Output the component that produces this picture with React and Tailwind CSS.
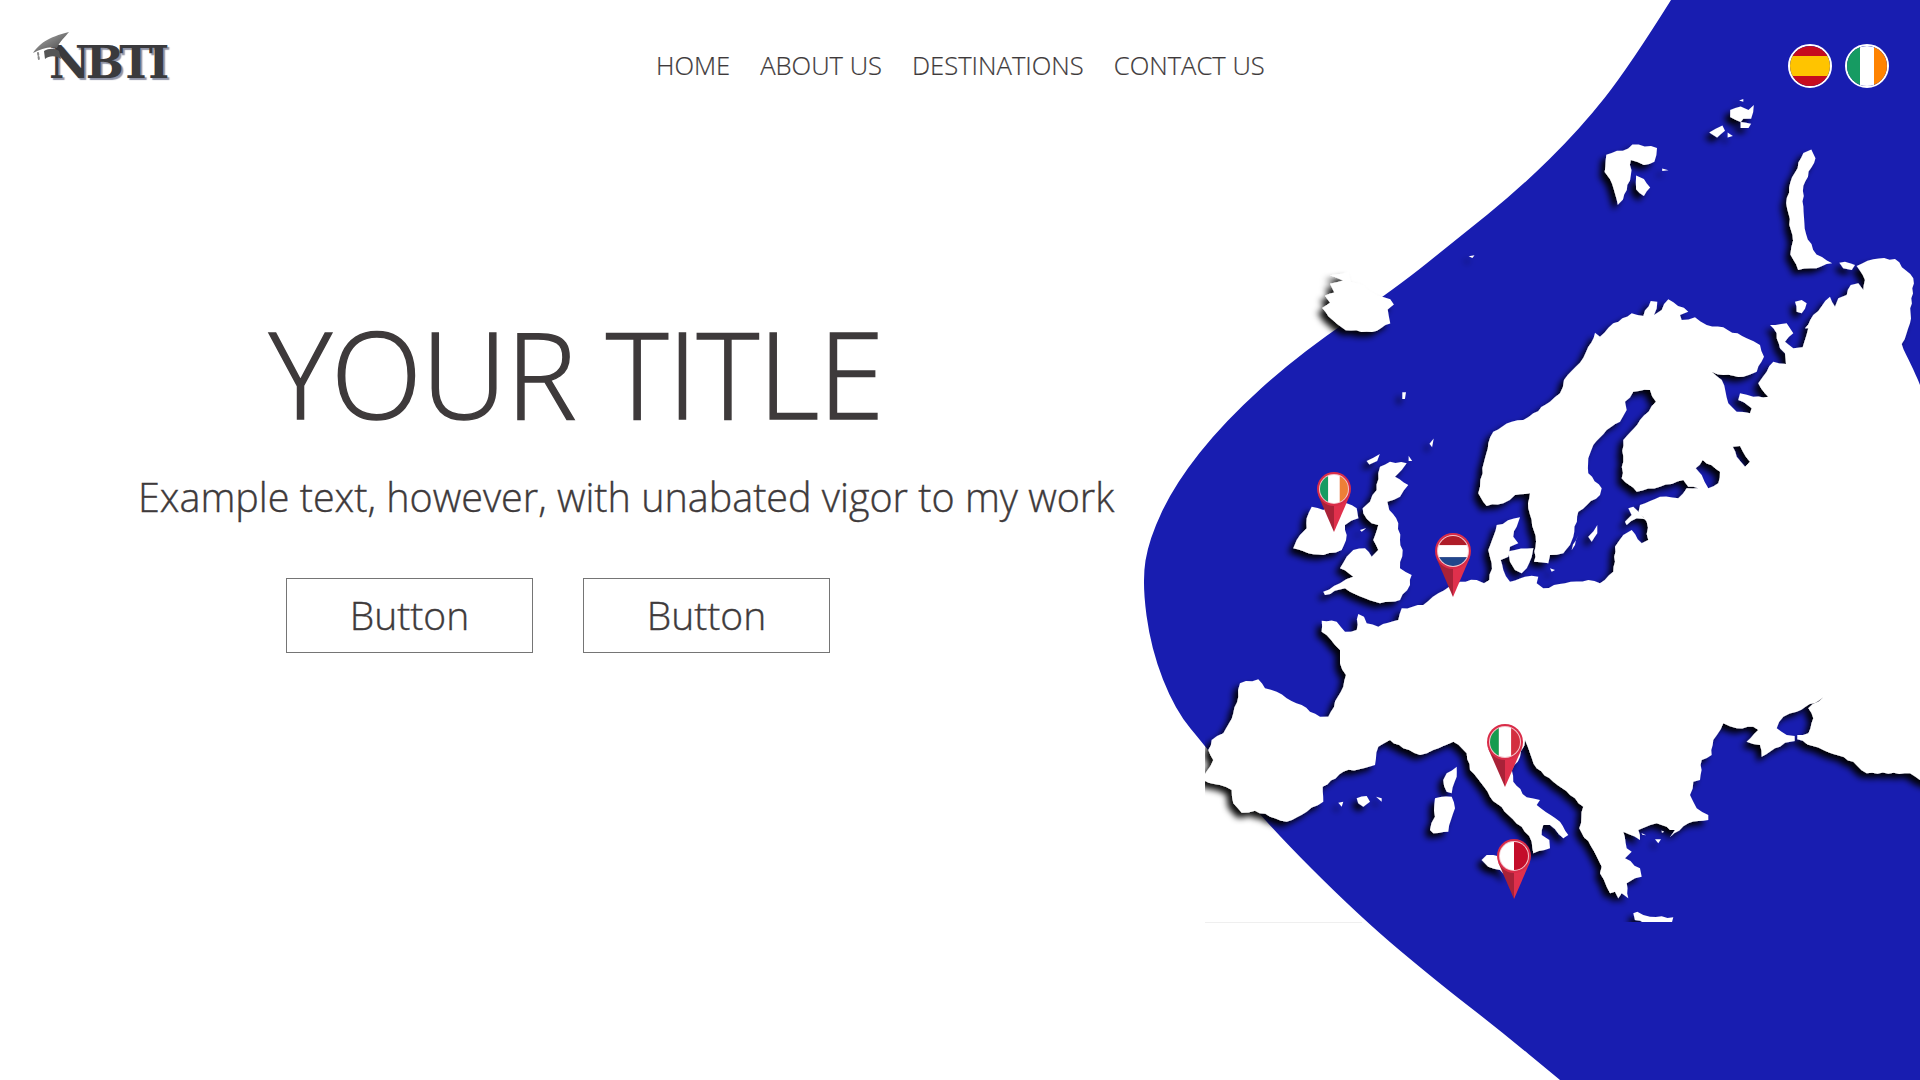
const z = (bx, by, s, pts, sy = s) => pts.map(([x, y]) => [bx + x * s, by + y * sy]);

// breaks long coast edges up a little so they don't read as straight lines
function rough(pts) {
  const out = [];
  pts.forEach((p, i) => {
    const q = pts[(i + 1) % pts.length];
    out.push(p);
    const len = Math.hypot(q[0] - p[0], q[1] - p[1]);
    const steps = Math.floor(len / 5);
    for (let k = 1; k < steps; k++) {
      const t = k / steps;
      const h = Math.sin(p[0] * 12.9 + p[1] * 78.2 + k * 37.7) * 43758.5;
      const j = (h - Math.floor(h) - 0.5) * 2.2;
      out.push([p[0] + (q[0] - p[0]) * t + ((q[1] - p[1]) / len) * j, p[1] + (q[1] - p[1]) * t - ((q[0] - p[0]) / len) * j]);
    }
  });
  return out;
}
const poly = (pts) => "M" + rough(pts).map(([x, y]) => `${x.toFixed(1)} ${y.toFixed(1)}`).join("L") + "Z";

// overview zoom crops were stretched, so these use their own scales
const big = (pts) => z(1100, 0, 0.523, pts, 0.344);
const north = (pts) => z(1580, 240, 1 / 3, pts);
const baltic = (pts) => z(1460, 380, 1 / 3, pts);
const west = (pts) => z(1190, 590, 1 / 3, pts);
const italy = (pts) => z(1450, 710, 1 / 3, pts);
const east = (pts) => z(1560, 680, 1 / 3, pts);
const uk = (pts) => z(1290, 460, 1 / 3, pts);

const mainland = [
  ...north([[1020, 435], [965, 312], [990, 250], [1000, 115], [945, 57], [880, 58], [830, 78], [855, 120], [850, 150], [835, 130], [812, 135], [800, 165], [775, 175], [765, 200], [750, 170], [700, 225], [675, 265], [685, 265], [668, 322], [640, 325], [615, 305], [640, 280], [620, 250], [570, 255], [590, 280], [600, 325], [615, 340], [618, 372], [580, 365], [560, 395], [535, 430], [565, 470], [520, 470], [480, 460], [475, 480], [515, 505], [510, 520], [470, 515], [445, 490], [425, 420], [395, 395], [430, 405], [490, 410], [530, 395], [552, 350], [540, 315], [500, 295], [430, 262], [380, 255], [345, 232], [305, 240], [300, 225], [325, 215], [265, 178], [245, 210], [222, 225], [232, 185], [212, 183], [190, 228], [155, 220], [100, 250], [60, 290], [45, 278], [25, 320], [0, 368]]),
  ...baltic([[312, 0], [300, 40], [270, 65], [220, 100], [190, 120], [155, 125], [100, 155], [85, 190], [75, 235], [68, 280], [60, 320], [55, 340], [80, 378], [130, 370], [165, 345], [210, 340], [205, 385], [215, 420], [228, 485], [222, 545], [265, 550], [270, 525], [310, 520], [330, 495], [340, 470], [355, 395], [420, 345], [425, 325], [385, 280], [385, 235], [400, 195], [440, 150], [480, 125], [500, 90], [495, 65], [520, 35], [570, 30], [588, 65], [540, 120], [490, 180], [490, 245], [485, 295], [530, 335], [600, 320], [670, 300], [685, 320], [715, 325], [680, 325], [655, 355], [600, 350], [540, 375], [535, 400], [560, 425], [565, 480], [545, 490], [515, 450], [490, 465], [465, 500], [460, 575], [420, 610], [385, 600], [315, 610], [250, 625], [230, 610], [235, 590], [195, 590], [150, 605], [130, 570], [122, 540], [145, 530], [150, 500], [175, 490], [160, 470], [170, 440], [180, 412], [110, 435], [85, 510], [95, 550], [88, 600], [72, 610], [50, 600], [0, 605]]),
  ...west([[745, 10], [700, 45], [635, 55], [625, 90], [565, 110], [530, 100], [522, 80], [505, 72], [500, 120], [465, 125], [440, 95], [395, 92], [395, 125], [435, 165], [450, 180], [450, 220], [468, 255], [460, 290], [415, 380], [390, 380], [360, 365], [335, 345], [290, 325], [260, 305], [225, 295], [205, 268], [150, 280], [145, 320], [130, 370], [100, 430], [65, 450], [55, 480], [70, 510], [40, 560], [40, 570], [90, 585], [125, 600], [130, 640], [155, 668], [195, 662], [240, 680], [290, 695], [350, 665], [400, 635], [398, 590], [460, 545], [555, 525], [565, 470], [600, 450], [640, 475], [690, 495], [730, 480], [790, 455], [830, 490], [840, 540], [900, 620]]),
  ...italy([[175, 315], [215, 350], [245, 395], [250, 430], [300, 415], [298, 390], [275, 375], [280, 345], [300, 345], [340, 385], [355, 375], [330, 335], [260, 285], [270, 270], [230, 262], [190, 215], [185, 180], [210, 140], [225, 90], [240, 130], [260, 175], [310, 215], [360, 255], [400, 290]]),
  ...east([[58, 445], [100, 510], [125, 560], [120, 580], [140, 620], [150, 640], [165, 635], [175, 655], [185, 640], [205, 655], [200, 610], [225, 595], [245, 590], [240, 565], [195, 535], [215, 515], [200, 505], [190, 455], [240, 480], [235, 450], [290, 430], [320, 440], [330, 450], [345, 450], [330, 472], [385, 430], [445, 420], [445, 405], [410, 385], [390, 345], [400, 305], [420, 300], [425, 240], [455, 225], [460, 180], [490, 130], [530, 145], [580, 140], [595, 150], [560, 185], [600, 195], [605, 230], [660, 200], [675, 188], [704, 183], [704, 168], [680, 165], [650, 145], [670, 110], [710, 95], [790, 52], [745, 85], [760, 115], [745, 160], [712, 165], [712, 178], [790, 210], [880, 245], [920, 280], [1050, 280], [1080, 300]]),
  // run past the page edge so the closing side's shadow stays out of sight
  [1950, 790],
  [1950, 385],
];

const lakes = [
  north([[347, 685], [368, 660], [420, 695], [415, 730], [385, 745], [365, 705]]),
  north([[458, 620], [480, 618], [510, 665], [495, 680], [470, 650]]),
];

const islands = [
  big([[440, 800], [475, 790], [480, 820], [495, 825], [520, 850], [555, 870], [562, 885], [550, 900], [555, 940], [520, 965], [470, 960], [445, 930], [425, 895], [440, 880], [430, 860], [448, 850], [440, 825], [465, 815]]),
  big([[968, 450], [1010, 432], [1018, 420], [1065, 430], [1060, 470], [1040, 480], [1015, 465], [1015, 510], [1000, 580], [990, 595], [975, 520], [965, 500]]),
  big([[1025, 510], [1040, 520], [1052, 545], [1040, 570], [1025, 550]]),
  big([[1075, 490], [1087, 495], [1075, 497]]),
  big([[1205, 320], [1225, 310], [1240, 320], [1250, 305], [1245, 345], [1230, 345], [1225, 355], [1205, 340]]),
  big([[1222, 292], [1230, 288], [1230, 296]]),
  big([[1165, 385], [1190, 365], [1195, 380], [1180, 400]]),
  big([[1200, 385], [1210, 395], [1200, 400]]),
  big([[1225, 355], [1245, 360], [1240, 372], [1225, 372]]),
  big([[1345, 445], [1360, 435], [1368, 460], [1345, 540], [1345, 600], [1350, 680], [1370, 740], [1400, 765], [1370, 780], [1335, 785], [1320, 740], [1325, 700], [1312, 590], [1320, 530]]),
  big([[705, 745], [716, 742], [712, 750]]),
  big([[578, 1140], [585, 1140], [583, 1160], [578, 1160]]),
  big([[630, 1290], [638, 1275], [635, 1300]]),
  big([[510, 1340], [535, 1320], [530, 1340], [515, 1350]]),
  big([[590, 1325], [597, 1340], [590, 1340]]),
  north([[645, 185], [665, 180], [680, 190], [665, 220], [650, 215]]),
  north([[778, 68], [795, 65], [825, 75], [815, 90], [790, 85]]),
  uk([[300, 5], [350, 10], [335, 30], [315, 50], [355, 75], [330, 110], [292, 125], [298, 150], [325, 190], [330, 240], [338, 270], [330, 325], [365, 345], [360, 375], [330, 420], [270, 430], [225, 415], [165, 385], [105, 405], [100, 395], [150, 370], [190, 350], [150, 325], [170, 290], [190, 270], [225, 265], [245, 290], [265, 270], [250, 240], [265, 195], [245, 190], [220, 160], [218, 145], [240, 125], [260, 90], [265, 40], [270, 20]]),
  uk([[65, 140], [100, 150], [135, 130], [170, 130], [200, 145], [205, 175], [165, 195], [170, 225], [155, 270], [100, 285], [55, 280], [10, 265], [20, 240], [30, 225], [50, 205], [50, 175]]),
  uk([[210, 210], [228, 205], [215, 215]]),
  italy([[95, 450], [110, 435], [150, 440], [175, 500], [150, 480], [115, 470]]),
  west([[800, 530], [800, 560], [785, 610], [770, 605], [760, 570], [770, 550]]),
  west([[735, 625], [785, 620], [795, 655], [775, 725], [730, 730], [720, 720], [735, 680]]),
  west([[445, 638], [460, 635], [455, 650]]),
  west([[500, 625], [530, 618], [540, 635], [520, 650], [505, 640]]),
  west([[558, 620], [575, 625], [575, 635]]),
  baltic([[385, 470], [412, 435], [412, 460], [395, 485]]),
  baltic([[335, 510], [355, 465], [345, 495]]),
  baltic([[505, 385], [520, 380], [540, 400], [565, 420], [530, 415], [500, 435], [495, 425], [515, 405]]),
  baltic([[165, 510], [220, 505], [215, 530], [200, 565], [185, 580], [165, 570], [150, 545], [140, 515]]),
  baltic([[270, 565], [285, 570], [275, 575]]),
  east([[220, 700], [232, 695], [270, 710], [340, 712], [335, 730], [270, 735], [225, 720]]),
  east([[285, 478], [303, 478], [295, 490]]),
  east([[305, 452], [312, 455], [306, 458]]),
  east([[245, 460], [258, 466], [247, 464]]),
];

const edge = [[1671, 0], [1629, 67], [1580, 129], [1518, 190], [1457, 239], [1396, 288], [1298, 355], [1224, 422], [1175, 484], [1149, 539], [1142, 582], [1151, 649], [1175, 710], [1206, 747], [1262, 819], [1361, 918], [1440, 984], [1497, 1028], [1560, 1080]];

function smooth(pts) {
  let d = `M${pts[0][0]} ${pts[0][1]}`;
  for (let i = 1; i < pts.length - 1; i++) {
    const mx = (pts[i][0] + pts[i + 1][0]) / 2;
    const my = (pts[i][1] + pts[i + 1][1]) / 2;
    d += `Q${pts[i][0]} ${pts[i][1]} ${mx} ${my}`;
  }
  const last = pts[pts.length - 1];
  return d + `L${last[0]} ${last[1]}L1920 1080L1920 0Z`;
}

const flags = {
  ie: [["#169b62", -1, 0.66], ["#ffffff", -0.34, 0.68], ["#ee7f36", 0.34, 0.66]],
  it: [["#169b4e", -1, 0.66], ["#ffffff", -0.34, 0.68], ["#d32f3f", 0.34, 0.66]],
  mt: [["#ffffff", -1, 1], ["#c40d2a", 0, 1]],
};

function Pin({ id, x, y, tip, r, flag }) {
  return (
    <g transform={`translate(${x} ${y})`}>
      <clipPath id={id}>
        <circle r={r - 3} />
      </clipPath>
      <path d={`M${-r * 0.92} ${r * 0.4}L0 ${tip}L0 0Z`} fill="#a92238" />
      <path d={`M${r * 0.92} ${r * 0.4}L0 ${tip}L0 0Z`} fill="#e0304c" />
      <circle r={r} fill="#d92c48" />
      <circle r={r - 2} fill="#f3c6cc" />
      <g clipPath={`url(#${id})`}>
        {flag === "nl" ? (
          <>
            <rect x={-r} y={-r} width={2 * r} height={r * 0.68} fill="#ae1c28" />
            <rect x={-r} y={-r * 0.32} width={2 * r} height={r * 0.66} fill="#ffffff" />
            <rect x={-r} y={r * 0.34} width={2 * r} height={r * 0.66} fill="#21468b" />
          </>
        ) : (
          flags[flag].map(([c, from, w]) => (
            <rect key={c} x={from * r} y={-r} width={w * r} height={2 * r} fill={c} />
          ))
        )}
      </g>
    </g>
  );
}

function MapBackground() {
  return (
    <svg className="absolute inset-0 h-full w-full" viewBox="0 0 1920 1080">
      <defs>
        <filter id="landShadow" filterUnits="userSpaceOnUse" x="0" y="0" width="2000" height="1080">
          <feDropShadow dx="-5" dy="5" stdDeviation="3" floodColor="#000" floodOpacity="0.95" />
        </filter>
        <clipPath id="mapClip">
          <rect x="1205" y="0" width="715" height="922" />
        </clipPath>
      </defs>
      <path d={smooth(edge)} fill="#181db0" />
      <path d="M1205 922.5H1362" stroke="#efefef" strokeWidth="1" />
      <g clipPath="url(#mapClip)">
        <g filter="url(#landShadow)" fill="#fff">
          <path fillRule="evenodd" d={[mainland, ...lakes].map(poly).join("")} />
          {islands.map((pts, i) => (
            <path key={i} d={poly(pts)} />
          ))}
        </g>
      </g>
      <Pin id="pinIe" x={1334} y={489} tip={43} r={17} flag="ie" />
      <Pin id="pinNl" x={1453} y={551} tip={46} r={18} flag="nl" />
      <Pin id="pinIt" x={1505} y={742} tip={45} r={18} flag="it" />
      <Pin id="pinMt" x={1514} y={856} tip={43} r={17} flag="mt" />
    </svg>
  );
}

function Logo() {
  return (
    <div className="relative w-[623px] pb-[8px]">
      <span className="ml-[16px] block font-['DejaVu_Serif',serif] text-[45px] leading-none font-bold tracking-[-4.5px] text-[#3a3a3d] [text-shadow:2px_2px_1px_#8f93a6]">
        NBTI
      </span>
      <svg className="absolute top-[-9px] left-0 h-[36px] w-[40px]" viewBox="0 0 40 36">
        <defs>
          <linearGradient id="capFill" x1="0" y1="0" x2="1" y2="1">
            <stop offset="0" stopColor="#b5b5b5" />
            <stop offset="1" stopColor="#3d3d3d" />
          </linearGradient>
        </defs>
        <path d="M0 22C6 13 15 6 36 1C32 6 27 10 24 17C16 15 8 18 0 22Z" fill="url(#capFill)" />
        <path d="M11 20C16 17 22 17 26 20L28 28C22 24 16 25 12 28Z" fill="#555" />
        <path d="M5 22L6 29" stroke="#888" strokeWidth="2" strokeLinecap="round" strokeDasharray="2 2" />
      </svg>
    </div>
  );
}

function RoundFlag({ stripes, vertical }) {
  return (
    <div className={vertical ? "flex h-[44px] w-[44px] flex-row overflow-hidden rounded-full border-2 border-white" : "flex h-[44px] w-[44px] flex-col overflow-hidden rounded-full border-2 border-white"}>
      {stripes.map(([c, cls]) => (
        <div key={c} className={cls} style={{ backgroundColor: c }} />
      ))}
    </div>
  );
}

export default function App() {
  const links = ["HOME", "ABOUT US", "DESTINATIONS", "CONTACT US"];

  return (
    <div className="relative h-[1080px] overflow-hidden bg-white font-['Open_Sans',sans-serif] font-light text-[#3e3a3b]">
      <MapBackground />

      <div className="relative">
        {/* HEADER */}
        <header className="flex h-[132px] items-center pr-[31px] pl-[33px]">
          <Logo />
          <nav className="flex gap-[30px] text-[25.6px] [-webkit-text-stroke:0.2px_#3e3a3b]">
            {links.map((l) => (
              <a key={l}>{l}</a>
            ))}
          </nav>
          <div className="ml-auto flex gap-[13px]">
            <RoundFlag
              stripes={[["#c60b1e", "flex-1"], ["#ffc400", "flex-[2]"], ["#c60b1f", "flex-1"]]}
            />
            <RoundFlag
              vertical
              stripes={[["#169b62", "flex-1"], ["#ffffff", "flex-[1.1]"], ["#ff8300", "flex-1"]]}
            />
          </div>
        </header>

        {/* HERO */}
        <main className="flex flex-col items-start">
          <h1 className="mt-[182px] ml-[269px] text-[119px] leading-none font-light tracking-[-0.8px] [-webkit-text-stroke:1.5px_#3e3a3b]">YOUR TITLE</h1>
          <p className="mt-[45px] ml-[138px] text-[39.5px] leading-none [-webkit-text-stroke:0.4px_#3e3a3b]">
            Example text, however, with unabated vigor to my work
          </p>
          <div className="mt-[60px] ml-[286px] flex gap-[50px]">
            <button className="h-[75px] w-[247px] border border-[#757575] text-[39px] font-light [-webkit-text-stroke:0.4px_#3e3a3b]">Button</button>
            <button className="h-[75px] w-[247px] border border-[#757575] text-[39px] font-light [-webkit-text-stroke:0.4px_#3e3a3b]">Button</button>
          </div>
        </main>
      </div>
    </div>
  );
}
